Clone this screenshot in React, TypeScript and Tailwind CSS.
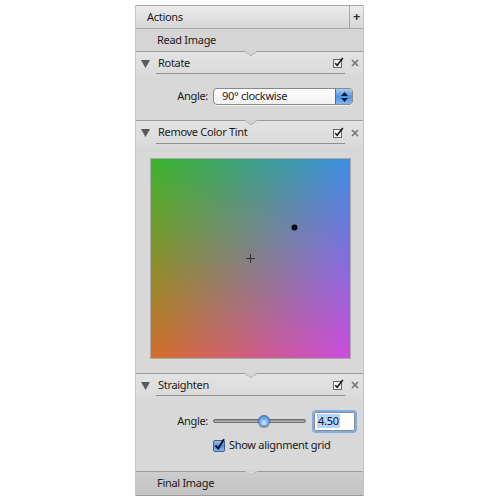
import React from "react";

const font = "[font-family:'Noto_Sans','DejaVu_Sans',sans-serif] tracking-[-0.3px]";

function Notch() {
  return (
    <div className="relative h-px bg-[#9c9c9c]">
      <svg
        className="absolute left-[108px] top-0"
        width="14"
        height="6"
        viewBox="0 0 14 6"
      >
        <polygon points="0,0 7,5 14,0" fill="#d3d3d3" />
        <polyline points="0,0 7,5 14,0" fill="none" stroke="#9c9c9c" strokeWidth="1" />
        <polyline points="1,1 7,5.6 13,1" fill="none" stroke="#f0f0f0" strokeWidth="0.6" />
      </svg>
    </div>
  );
}

function Disclosure() {
  return (
    <svg width="9" height="8" viewBox="0 0 9 8" className="shrink-0">
      <polygon points="0,0 9,0 4.5,8" fill="#5a5a5a" />
    </svg>
  );
}

function EnableBox() {
  return (
    <svg width="11" height="11" viewBox="0 0 11 11">
      <rect x="0.5" y="2.5" width="8" height="8" fill="#f4f4f4" stroke="#6a6a6a" />
      <path d="M2.2 6.2 L4.2 8.3 L9.8 1" fill="none" stroke="#1a1a1a" strokeWidth="1.6" />
    </svg>
  );
}

function CloseX() {
  return (
    <svg width="8" height="8" viewBox="0 0 8 8">
      <path d="M1 1 L7 7 M7 1 L1 7" stroke="#777777" strokeWidth="1.7" />
    </svg>
  );
}

function SectionHeader({ title, tall }: { title: string; tall?: boolean }) {
  const row = tall ? "h-[23px]" : "h-[22px]";
  return (
    <div
      className={`flex items-start bg-gradient-to-b from-[#e3e3e3] to-[#dadada] ${
        tall ? "h-[25px]" : "h-[24px]"
      }`}
    >
      <div className={`ml-[5px] flex items-center pt-[1px] ${row}`}>
        <Disclosure />
      </div>
      <div className={`ml-[6px] w-[189px] flex items-center border-b border-[#8e8e8e] ${row}`}>
        <span className="ml-[2px] flex-1 pt-[1px] text-[11px] text-[#1a1a1a]">{title}</span>
        <span className="mr-[1px] flex items-center">
          <EnableBox />
        </span>
      </div>
      <div className={`ml-[6px] flex items-center ${row}`}>
        <CloseX />
      </div>
    </div>
  );
}

function PopUp() {
  return (
    <div className="flex h-[17px] w-[140px] items-stretch rounded-[4px] border border-[#8a8a8a] bg-gradient-to-b from-[#ffffff] to-[#f1f1f1] shadow-[0_1px_0_rgba(255,255,255,0.6)]">
      <span className="flex flex-1 items-center pl-[8px] text-[11px] text-[#1a1a1a]">
        90° clockwise
      </span>
      <span className="flex w-[17px] items-center justify-center rounded-r-[3px] border-l border-[#4a6fa5] bg-gradient-to-b from-[#a9cdf3] via-[#4f94e6] to-[#7fb6f0]">
        <svg width="7" height="10" viewBox="0 0 7 10">
          <polygon points="3.5,0 7,4 0,4" fill="#0d1a33" />
          <polygon points="0,6 7,6 3.5,10" fill="#0d1a33" />
        </svg>
      </span>
    </div>
  );
}

function TintField() {
  return (
    <div className="relative ml-[14px] h-[201px] w-[201px] border border-[#a9a9a9]">
      <svg width="199" height="199" viewBox="0 0 199 199" className="block">
        <defs>
          <linearGradient id="leftEdge" x1="0" y1="0" x2="0" y2="1">
            <stop offset="0" stopColor="#3cb52a" />
            <stop offset="1" stopColor="#d46e28" />
          </linearGradient>
          <linearGradient id="rightEdge" x1="0" y1="0" x2="0" y2="1">
            <stop offset="0" stopColor="#3d8ee2" />
            <stop offset="1" stopColor="#cb4cde" />
          </linearGradient>
          <linearGradient id="fadeX" x1="0" y1="0" x2="1" y2="0">
            <stop offset="0" stopColor="#000" />
            <stop offset="1" stopColor="#fff" />
          </linearGradient>
          <mask id="rightMask">
            <rect width="199" height="199" fill="url(#fadeX)" />
          </mask>
        </defs>
        <rect width="199" height="199" fill="url(#leftEdge)" />
        <rect width="199" height="199" fill="url(#rightEdge)" mask="url(#rightMask)" />
        <circle cx="143.5" cy="68.5" r="3" fill="#0a0a14" />
        <path d="M99.5 95 V104 M95 99.5 H104" stroke="#333" strokeWidth="1" />
      </svg>
    </div>
  );
}

function Slider() {
  return (
    <div className="relative flex h-[20px] w-[93px] items-center">
      <div className="h-[4px] w-full rounded-full border border-[#6d6d6d] bg-gradient-to-b from-[#8a8a8a] to-[#bdbdbd]" />
      <div className="absolute left-[45px] top-[4px] h-[12px] w-[12px] rounded-full border border-[#4d6f9e] bg-[radial-gradient(circle_at_50%_70%,#cde6ff_0%,#6aa8ec_55%,#3a78c8_100%)] shadow-[0_1px_1px_rgba(0,0,0,0.35)]" />
    </div>
  );
}

function AngleField() {
  return (
    <div className="flex h-[19px] w-[41px] items-center rounded-[2px] bg-[#ffffff] pl-[3px] shadow-[0_0_0_2px_#7eaee8,inset_0_0_0_1px_#8b8b8b]">
      <span className="bg-[#b5d5ff] px-[1px] text-[11px] leading-[14px] text-[#111]">4.50</span>
    </div>
  );
}

function CheckOn() {
  return (
    <svg width="12" height="14" viewBox="0 0 12 14" className="shrink-0">
      <defs>
        <linearGradient id="aqua" x1="0" y1="0" x2="0" y2="1">
          <stop offset="0" stopColor="#9ec8f2" />
          <stop offset="0.5" stopColor="#4e8fdd" />
          <stop offset="1" stopColor="#8fc1f2" />
        </linearGradient>
      </defs>
      <rect x="0.5" y="2.5" width="11" height="11" rx="1.5" fill="url(#aqua)" stroke="#3f5f8f" />
      <path d="M2.6 7.6 L5.2 10.6 L11 1.2" fill="none" stroke="#0d1320" strokeWidth="2" />
    </svg>
  );
}

export default function App() {
  return (
    <div className={`min-h-[500px] bg-white pt-[5px] ${font}`}>
      <div className="ml-[135px] w-[229px] bg-[#d8d8d8] border-l border-r border-[#c4c4c4]">
        {/* panel title */}
        <div className="flex h-[24px] items-stretch border-y border-[#a8a8a8] bg-gradient-to-b from-[#ececec] to-[#d6d6d6]">
          <span className="flex flex-1 items-center pl-[11px] text-[11px] text-[#1a1a1a]">
            Actions
          </span>
          <span className="flex w-[14px] items-center justify-center border-l border-[#a8a8a8] text-[13px] font-bold text-[#333]">
            +
          </span>
        </div>

        <div className="flex h-[22px] items-center bg-[#d5d5d5] pl-[21px] text-[11px] text-[#1a1a1a]">
          Read Image
        </div>
        <Notch />

        <SectionHeader title="Rotate" />
        <div className="flex h-[44px] items-start bg-[#d8d8d8] pt-[12px]">
          <span className="flex h-[17px] w-[72px] items-center justify-end text-[11px] text-[#1a1a1a]">
            Angle:
          </span>
          <span className="ml-[5px]">
            <PopUp />
          </span>
        </div>
        <Notch />

        <SectionHeader title="Remove Color Tint" tall />
        <div className="h-[227px] bg-[#d8d8d8] pt-[12px]">
          <TintField />
        </div>
        <Notch />

        <SectionHeader title="Straighten" />
        <div className="h-[73px] bg-[#d8d8d8] pt-[13px]">
          <div className="flex h-[20px] items-center">
            <span className="w-[72px] text-right text-[11px] text-[#1a1a1a]">Angle:</span>
            <span className="ml-[5px]">
              <Slider />
            </span>
            <span className="ml-[8px]">
              <AngleField />
            </span>
          </div>
          <div className="mt-[5px] flex h-[18px] items-center pl-[77px]">
            <CheckOn />
            <span className="ml-[4px] text-[11px] text-[#1a1a1a]">Show alignment grid</span>
          </div>
        </div>
        <Notch />

        <div className="flex h-[24px] items-center border-b border-[#9c9c9c] bg-gradient-to-b from-[#cdcdcd] to-[#c2c2c2] pl-[21px] text-[11px] text-[#1a1a1a]">
          Final Image
        </div>
      </div>
    </div>
  );
}
